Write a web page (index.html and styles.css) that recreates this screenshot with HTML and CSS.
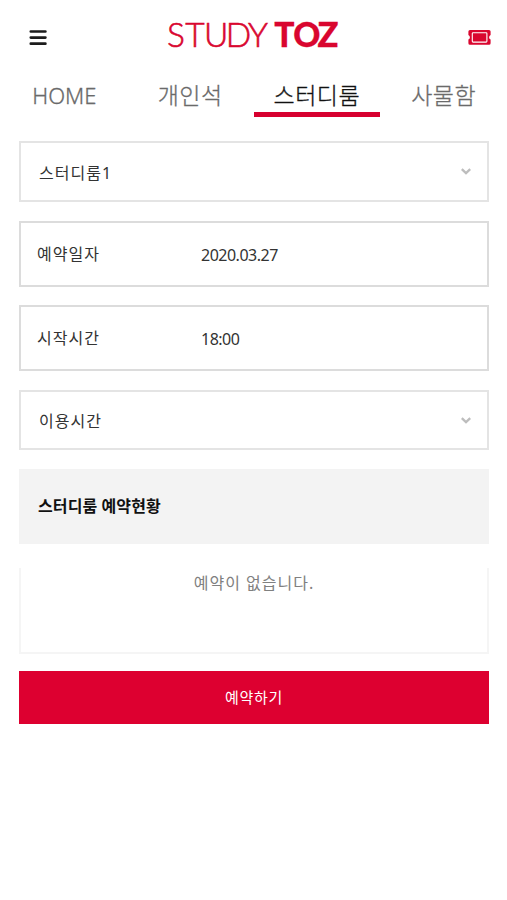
FILE: index.html
```html
<!DOCTYPE html>
<html lang="ko">
<head>
<meta charset="utf-8">
<title>STUDY TOZ</title>
<link rel="stylesheet" href="styles.css">
</head>
<body>
<header class="header">
  <button class="icon-button" aria-label="메뉴">
    <svg width="18" height="17" viewBox="0 0 18 17"><g fill="none" stroke="#1c1c1c" stroke-width="2.7" stroke-linecap="round"><path d="M1.8 2.5h14.6M1.8 8.6h14.6M1.8 14.7h14.6"/></g></svg>
  </button>
  <svg class="logo" width="184" height="56" viewBox="0 0 184 56">
    <text class="logo-study" y="42.5" x="1 19.3 38 59.8 82">STUDY</text>
    <text class="logo-toz" y="42.5" x="108.3 127.3 151.5">TO<tspan class="logo-z">Z</tspan></text>
  </svg>
  <button class="icon-button" aria-label="이용권">
    <svg width="23" height="17" viewBox="0 0 23 17"><path fill="#d9062f" d="M2 1h19a1.6 1.6 0 0 1 1.6 1.6V6a2.5 2.5 0 0 0 0 4.6v3.6a1.6 1.6 0 0 1-1.6 1.6H2a1.6 1.6 0 0 1-1.6-1.6v-3.6a2.5 2.5 0 0 0 0-4.6V2.6A1.6 1.6 0 0 1 2 1z"/><rect x="4.3" y="3.7" width="14.6" height="9.4" rx=".8" fill="none" stroke="#fff" stroke-width="1.1"/></svg>
  </button>
</header>
<nav class="tabs">
  <a class="tab tab-home">HOME</a>
  <a class="tab">개인석</a>
  <a class="tab active">스터디룸</a>
  <a class="tab">사물함</a>
</nav>
<main class="form">
  <div class="field select">
    <span>스터디룸1</span>
    <svg width="10" height="7" viewBox="0 0 10 7"><path d="M.8 1.2L5 5.2l4.2-4" fill="none" stroke="#bdbdbd" stroke-width="2.3"/></svg>
  </div>
  <div class="field input">
    <span class="label">예약일자</span>
    <span class="value">2020.03.27</span>
  </div>
  <div class="field input">
    <span class="label">시작시간</span>
    <span class="value">18:00</span>
  </div>
  <div class="field select">
    <span>이용시간</span>
    <svg width="10" height="7" viewBox="0 0 10 7"><path d="M.8 1.2L5 5.2l4.2-4" fill="none" stroke="#bdbdbd" stroke-width="2.3"/></svg>
  </div>
  <h2 class="section-title">스터디룸 예약현황</h2>
  <div class="status">예약이 없습니다.</div>
  <button class="submit">예약하기</button>
</main>
</body>
</html>
```
FILE: styles.css
```css
* { box-sizing: border-box; }
body {
  margin: 0;
  min-height: 900px;
  background: #fff;
  color: #333;
  font-family: "Noto Sans", "Noto Sans CJK KR", sans-serif;
  font-size: 16px;
}
button { border: 0; padding: 0; background: none; font: inherit; }
svg { display: block; }
.header {
  display: flex;
  justify-content: space-between;
  height: 76px;
  padding: 4px 16px 0 29px;
}
.icon-button { align-self: flex-start; margin-top: 25px; }
.logo { overflow: visible; }
.logo-study, .logo-toz { fill: #d9062f; stroke: #d9062f; font-family: Lato, sans-serif; }
.logo-study { font-size: 33.5px; font-weight: 300; stroke-width: .6px; }
.logo-toz { font-size: 33.5px; font-weight: 900; stroke-width: .3px; }
.logo-z { font-size: 34.5px; }
.tabs { display: grid; grid-template-columns: repeat(4, 1fr); height: 41px; }
.tab {
  height: 41px;
  line-height: 37px;
  text-align: center;
  font-family: "Noto Sans CJK KR", sans-serif;
  font-size: 23px;
  font-weight: 300;
  letter-spacing: .5px;
  color: #6a6a6a;
  -webkit-text-stroke: .3px currentColor;
}
.tab-home { padding-left: 2px; font-family: "Noto Sans", sans-serif; font-size: 22px; line-height: 38px; letter-spacing: 0; }
.active { border-bottom: 5px solid #d7002f; color: #111; }
.form { display: flex; flex-direction: column; padding: 24px 18px 0 19px; }
.field { display: flex; align-items: center; border: 2px solid #e4e4e4; letter-spacing: 1px; }
.select {
  justify-content: space-between;
  height: 61px;
  margin-bottom: 19px;
  padding: 0 16px 0 18px;
}
.input { height: 66px; margin-bottom: 18px; padding-left: 16px; border-color: #dcdcdc; }
.input + .select { height: 60px; margin-top: 1px; }
.label { width: 164px; padding-bottom: 2px; }
.value { padding-top: 1px; font-size: 16px; letter-spacing: -.5px; }
.section-title {
  height: 75px;
  margin: 0;
  padding-left: 19px;
  background: #f3f3f3;
  color: #111;
  font-size: 16px;
  font-weight: 700;
  letter-spacing: .1px;
  line-height: 74px;
}
.status {
  height: 86px;
  margin-top: 24px;
  border: 2px solid #f5f5f5;
  border-top: 0;
  color: #808080;
  letter-spacing: 1px;
  line-height: 30px;
  text-align: center;
}
.submit { height: 53px; margin-top: 17px; padding-bottom: 2px; background: #dd0030; color: #fff; font-size: 15px; letter-spacing: .7px; }
```
